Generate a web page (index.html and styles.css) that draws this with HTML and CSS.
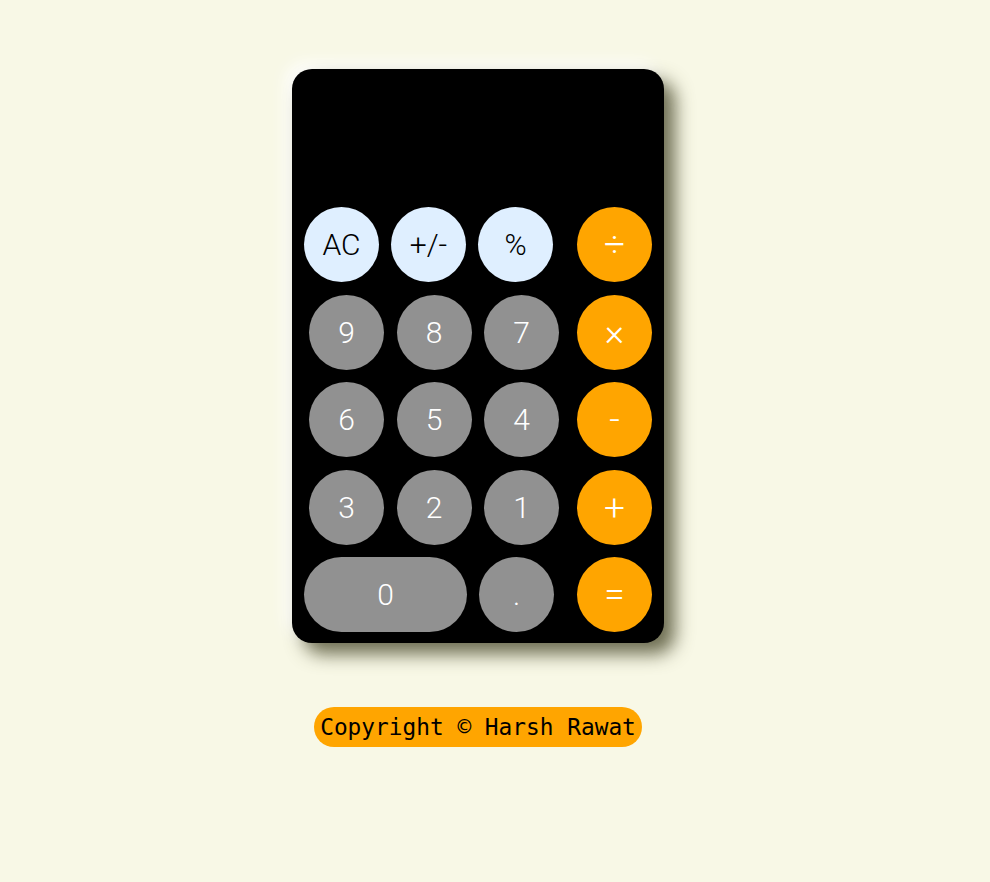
FILE: index.html
```html
<!DOCTYPE html>
<html>
<head>
<meta charset="utf-8">
<link rel="stylesheet" href="styles.css">
</head>
<body>
<div class="page">
  <div class="calc">
    <div class="display"></div>
    <div class="row row-top">
      <div class="group">
        <div class="btn light">AC</div>
        <div class="btn light">+/-</div>
        <div class="btn light">%</div>
      </div>
      <div class="btn op">÷</div>
    </div>
    <div class="row row-num">
      <div class="group">
        <div class="btn gray">9</div>
        <div class="btn gray">8</div>
        <div class="btn gray">7</div>
      </div>
      <div class="btn op">×</div>
    </div>
    <div class="row row-num">
      <div class="group">
        <div class="btn gray">6</div>
        <div class="btn gray">5</div>
        <div class="btn gray">4</div>
      </div>
      <div class="btn op">-</div>
    </div>
    <div class="row row-num">
      <div class="group">
        <div class="btn gray">3</div>
        <div class="btn gray">2</div>
        <div class="btn gray">1</div>
      </div>
      <div class="btn op">+</div>
    </div>
    <div class="row row-top">
      <div class="group">
        <div class="btn gray wide">0</div>
        <div class="btn gray">.</div>
      </div>
      <div class="btn op">=</div>
    </div>
  </div>
  <div class="footer">
    <span class="copy">Copyright © Harsh Rawat</span>
  </div>
</div>
</body>
</html>
```
FILE: styles.css
```css
html, body {
  margin: 0;
  padding: 0;
  background: #f8f8e6;
}
.page {
  padding-top: 69px;
  padding-left: 292px;
  width: 372px;
}
.calc {
  width: 372px;
  height: 574px;
  box-sizing: border-box;
  background: #000;
  border-radius: 20px;
  padding: 0 12px 11px 0;
  box-shadow: 11px 11px 18px rgba(85, 85, 55, 0.85), -6px -6px 16px rgba(255, 255, 255, 0.95);
  display: flex;
  flex-direction: column;
}
.display {
  height: 138px;
}
.row {
  display: flex;
  justify-content: space-between;
  align-items: center;
  height: 75px;
  margin-bottom: 12.5px;
}
.row:last-child {
  margin-bottom: 0;
}
.group {
  display: flex;
  gap: 12px;
}
.row-top .group {
  padding-left: 12px;
}
.row-num .group {
  padding-left: 17px;
  gap: 12.5px;
}
.btn {
  width: 75px;
  height: 75px;
  border-radius: 37.5px;
  display: flex;
  align-items: center;
  justify-content: center;
  font-family: Roboto, "Noto Sans", sans-serif;
  font-weight: 300;
  font-size: 30px;
  color: #fff;
}
.btn.wide {
  width: 163px;
}
.light {
  background: #dfefff;
  color: #000;
}
.gray {
  background: #919191;
}
.op {
  background: #ffa500;
  font-size: 37px;
}
.footer {
  margin-top: 64px;
  display: flex;
  justify-content: center;
}
.copy {
  display: inline-block;
  background: #ffa500;
  border-radius: 20px;
  height: 40px;
  line-height: 41px;
  padding: 0 6px;
  font-family: "DejaVu Sans Mono", "Liberation Mono", monospace;
  font-size: 22.8px;
  color: #000;
}
```
